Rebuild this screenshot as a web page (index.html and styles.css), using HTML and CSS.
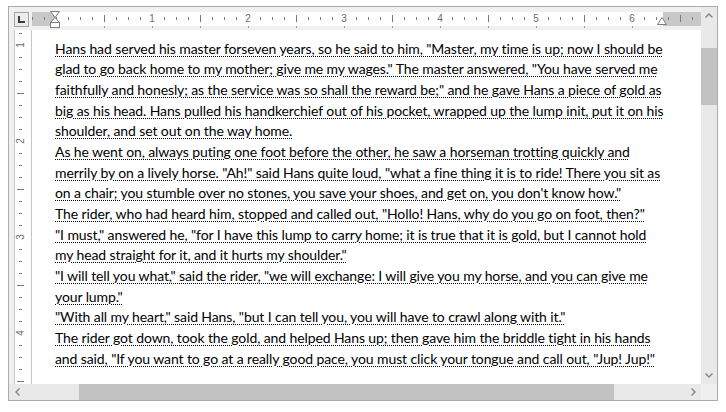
FILE: index.html
```html
<!DOCTYPE html>
<html lang="en">
<head>
    <meta charset="UTF-8">
    <meta name="viewport" content="width=device-width, initial-scale=1.0">
    <title>Rich Edit</title>
    <link rel="stylesheet" href="styles.css">
</head>
<body>
    <div class="editor">
        <!-- tab selector -->
        <div class="tab-select">
            <svg width="7" height="7" viewBox="0 0 7 7"><path d="M1 0 V6 H7" fill="none" stroke="#3c3c3c" stroke-width="2"/></svg>
        </div>

        <!-- horizontal ruler -->
        <div class="hruler">
            <div class="hruler-band">
                <div class="hruler-nums">
                    <span><b>1</b></span><span><b>2</b></span><span><b>3</b></span>
                    <span><b>4</b></span><span><b>5</b></span><span><b>6</b></span>
                </div>
            </div>
            <div class="hruler-tabs"></div>
            <svg class="indent-left" width="11" height="18" viewBox="0 0 11 18">
                <path d="M0.5 0.5 H9.5 L5 6.5 Z" fill="#fff" stroke="#7d7d7d"/>
                <path d="M5 6.5 L9.5 11.5 H0.5 Z" fill="#fff" stroke="#7d7d7d"/>
                <rect x="0.5" y="11.5" width="9" height="5" fill="#fff" stroke="#7d7d7d"/>
            </svg>
            <svg class="indent-right" width="11" height="9" viewBox="0 0 11 9">
                <path d="M5 0.5 L9.5 7.5 H0.5 Z" fill="#fff" stroke="#7d7d7d"/>
            </svg>
        </div>

        <!-- vertical ruler -->
        <div class="vruler">
            <div class="vruler-nums">
                <span><b>1</b></span><span><b>2</b></span><span><b>3</b></span><span><b>4</b></span>
            </div>
        </div>

        <!-- document -->
        <div class="page">
            <p>Hans had served his master forseven years, so he said to him, "Master, my time is up; now I should be<br>glad to go back home to my mother; give me my wages." The master answered, "You have served me<br>faithfully and honesly; as the service was so shall the reward be;" and he gave Hans a piece of gold as<br>big as his head. Hans pulled his handkerchief out of his pocket, wrapped up the lump init, put it on his<br>shoulder, and set out on the way home.</p>
            <p>As he went on, always puting one foot before the other, he saw a horseman trotting quickly and<br>merrily by on a lively horse. "Ah!" said Hans quite loud, "what a fine thing it is to ride! There you sit as<br>on a chair; you stumble over no stones, you save your shoes, and get on, you don't know how."</p>
            <p>The rider, who had heard him, stopped and called out, "Hollo! Hans, why do you go on foot, then?"</p>
            <p>"I must," answered he, "for I have this lump to carry home; it is true that it is gold, but I cannot hold<br>my head straight for it, and it hurts my shoulder."</p>
            <p>"I will tell you what," said the rider, "we will exchange: I will give you my horse, and you can give me<br>your lump."</p>
            <p>"With all my heart," said Hans, "but I can tell you, you will have to crawl along with it."</p>
            <p>The rider got down, took the gold, and helped Hans up; then gave him the briddle tight in his hands<br>and said, "If you want to go at a really good pace, you must click your tongue and call out, "Jup! Jup!"</p>
        </div>

        <!-- vertical scrollbar -->
        <div class="vscroll">
            <div class="sb-btn">
                <svg width="8" height="5" viewBox="0 0 8 5"><path d="M0.5 4.5 L4 1 L7.5 4.5" fill="none" stroke="#858585" stroke-width="1.4"/></svg>
            </div>
            <div class="sb-track"><div class="sb-thumb"></div></div>
            <div class="sb-btn">
                <svg width="8" height="5" viewBox="0 0 8 5"><path d="M0.5 0.5 L4 4 L7.5 0.5" fill="none" stroke="#858585" stroke-width="1.4"/></svg>
            </div>
        </div>

        <!-- horizontal scrollbar -->
        <div class="hscroll">
            <div class="sb-btn">
                <svg width="5" height="8" viewBox="0 0 5 8"><path d="M4.5 0.5 L1 4 L4.5 7.5" fill="none" stroke="#858585" stroke-width="1.4"/></svg>
            </div>
            <div class="sb-track"><div class="sb-thumb"></div></div>
            <div class="sb-btn">
                <svg width="5" height="8" viewBox="0 0 5 8"><path d="M0.5 0.5 L4 4 L0.5 7.5" fill="none" stroke="#858585" stroke-width="1.4"/></svg>
            </div>
        </div>

        <div class="corner"></div>
    </div>
</body>
</html>
```

FILE: styles.css
```css
/* General Reset */
* {
    margin: 0;
    padding: 0;
    box-sizing: border-box;
}

body {
    background: #ffffff;
    padding: 6px 0 0 8px;
    font-family: 'Lato', 'Open Sans', sans-serif;
}

.editor {
    width: 710px;
    height: 395px;
    border: 1px solid #ababab;
    background: #f0f0f0;
    display: grid;
    grid-template-columns: 5px 18px 669px 16px;
    grid-template-rows: 5px 16px 2px 354px 16px;
}

/* tab selector */
.tab-select {
    grid-column: 2;
    grid-row: 2;
    width: 15px;
    height: 15px;
    border: 1px solid #a3a3a3;
    background: #ececec;
    display: flex;
    align-items: center;
    justify-content: center;
}

/* horizontal ruler */
.hruler {
    grid-column: 3;
    grid-row: 2;
    position: relative;
}

.hruler-band {
    height: 14px;
    background:
        repeating-linear-gradient(to right, #7a7a7a 0 1px, transparent 1px 12px) 0 5px / 100% 3px no-repeat,
        repeating-linear-gradient(to right, #7a7a7a 0 1px, transparent 1px 96px) 72px 3px / 100% 7px no-repeat,
        linear-gradient(to right, #c8c8c8 0 23px, #ffffff 23px 631px, #c8c8c8 631px);
}

.hruler-nums {
    display: flex;
    margin-left: 72px;
}

.hruler-nums span,
.vruler-nums span {
    display: flex;
    align-items: center;
    justify-content: center;
}

.hruler-nums span {
    width: 96px;
    height: 14px;
}

.hruler-nums b,
.vruler-nums b {
    font-family: 'Liberation Sans', Arial, sans-serif;
    font-weight: normal;
    font-size: 10px;
    line-height: 10px;
    color: #6b6b6b;
    background: #ffffff;
    padding: 0 1px;
}

.hruler-tabs {
    height: 2px;
    width: 530px;
    margin-left: 72px;
    background: repeating-linear-gradient(to right, #9a9a9a 0 1px, transparent 1px 48px);
}

.indent-left {
    position: absolute;
    left: 18px;
    top: -1px;
}

.indent-right {
    position: absolute;
    left: 625px;
    top: 5px;
}

/* vertical ruler */
.vruler {
    grid-column: 2;
    grid-row: 4;
    border-left: 1px solid #c6c6c6;
    border-right: 1px solid #c6c6c6;
    overflow: hidden;
    background:
        repeating-linear-gradient(to bottom, #7a7a7a 0 1px, transparent 1px 12px) 4px 3px / 3px 100% no-repeat,
        repeating-linear-gradient(to bottom, #7a7a7a 0 1px, transparent 1px 96px) 2px 63px / 7px 100% no-repeat,
        #ffffff;
}

.vruler-nums {
    display: flex;
    flex-direction: column;
    margin-top: -33px;
}

.vruler-nums span {
    height: 96px;
    width: 11px;
}

.vruler-nums b {
    transform: rotate(-90deg);
}

/* document page */
.page {
    grid-column: 3;
    grid-row: 4;
    background: #ffffff;
    overflow: hidden;
    padding: 8.5px 0 0 23px;
    font-size: 14px;
    letter-spacing: -0.1px;
    line-height: 20.67px;
    color: #000000;
    white-space: nowrap;
}

.page p {
    text-decoration: underline dotted #000000;
    text-decoration-thickness: 1px;
    text-underline-offset: 2px;
}

/* scrollbars */
.vscroll {
    grid-column: 4;
    grid-row: 1 / 5;
    display: flex;
    flex-direction: column;
    background: #e9e9e9;
}

.hscroll {
    grid-column: 1 / 4;
    grid-row: 5;
    display: flex;
    background: #e9e9e9;
}

.sb-btn {
    flex: 0 0 17px;
    display: flex;
    align-items: center;
    justify-content: center;
}

.hscroll .sb-btn {
    flex-basis: 16px;
}

.sb-track {
    flex: 1;
}

.sb-thumb {
    background: #c2c2c2;
}

.vscroll .sb-thumb {
    margin-top: 24px;
    height: 57px;
}

.hscroll .sb-thumb {
    margin-left: 54px;
    width: 535px;
    height: 100%;
}

.corner {
    grid-column: 4;
    grid-row: 5;
    background: #f0f0f0;
}
```
